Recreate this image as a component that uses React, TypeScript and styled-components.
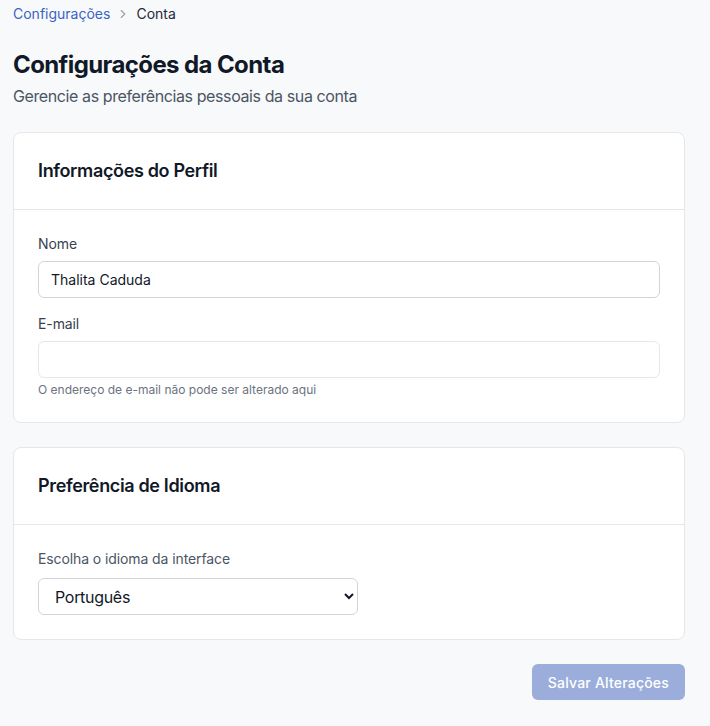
import React from 'react';
import styled, { createGlobalStyle } from 'styled-components';

const GlobalStyle = createGlobalStyle`
  html, body {
    margin: 0;
    padding: 0;
    background: #f8f9fb;
  }
  body {
    font-family: Inter, "Noto Sans", "Liberation Sans", sans-serif;
    color: #111827;
  }
`;

const Page = styled.main`
  padding: 4px 25px 24px 13px;
`;

const Breadcrumb = styled.nav`
  display: flex;
  align-items: center;
  gap: 6px;
  font-size: 14px;
  line-height: 20px;
`;

const CrumbLink = styled.a`
  color: #3b63c4;
  text-decoration: none;
`;

const CrumbCurrent = styled.span`
  color: #1f2937;
`;

const Title = styled.h1`
  margin: 25px 0 0;
  font-size: 24px;
  line-height: 32px;
  font-weight: 700;
  letter-spacing: -0.6px;
  color: #111827;
`;

const Subtitle = styled.p`
  margin: 3px 0 0;
  font-size: 16px;
  line-height: 24px;
  letter-spacing: -0.4px;
  color: #4b5563;
`;

const Card = styled.section`
  margin-top: 24px;
  background: #fff;
  border: 1px solid #e5e7eb;
  border-radius: 8px;
`;

const CardHeader = styled.header`
  padding: 24px;
  border-bottom: 1px solid #e5e7eb;
`;

const CardTitle = styled.h2`
  margin: 0;
  font-size: 18px;
  line-height: 28px;
  font-weight: 600;
  letter-spacing: -0.35px;
  color: #111827;
`;

const CardBody = styled.div`
  padding: 24px;
  display: flex;
  flex-direction: column;
  gap: 16px;
`;

const Field = styled.div`
  display: flex;
  flex-direction: column;
`;

const Label = styled.label<{ $muted?: boolean }>`
  font-size: 14px;
  line-height: 20px;
  letter-spacing: -0.1px;
  color: ${(p) => (p.$muted ? '#4b5563' : '#374151')};
  margin-bottom: ${(p) => (p.$muted ? '9px' : '7px')};
`;

const Input = styled.input<{ $disabled?: boolean }>`
  box-sizing: border-box;
  width: 100%;
  height: 37px;
  padding: 0 12px;
  font-family: inherit;
  font-size: 14px;
  color: #111827;
  background: #fff;
  border: 1px solid ${(p) => (p.$disabled ? '#e5e7eb' : '#d1d5db')};
  border-radius: 6px;
  outline: none;
`;

const Help = styled.p`
  margin: 4px 0 0;
  font-size: 12px;
  line-height: 16px;
  color: #6b7280;
`;

const Select = styled.select`
  box-sizing: border-box;
  width: 320px;
  height: 37px;
  padding: 0 8px 0 12px;
  font-family: inherit;
  font-size: 16px;
  letter-spacing: -0.3px;
  color: #111827;
  background: #fff;
  border: 1px solid #d1d5db;
  border-radius: 6px;
  outline: none;
`;

const Actions = styled.div`
  display: flex;
  justify-content: flex-end;
  margin-top: 24px;
`;

const SaveButton = styled.button`
  height: 36px;
  padding: 0 16px;
  font-family: inherit;
  font-size: 14px;
  font-weight: 500;
  letter-spacing: 0.2px;
  color: #fff;
  background: #9aaddb;
  border: none;
  border-radius: 6px;
  cursor: not-allowed;
`;

const Chevron = () => (
  <svg width="14" height="14" viewBox="0 0 24 24" fill="none" stroke="#9ca3af" strokeWidth="2" strokeLinecap="round" strokeLinejoin="round">
    <path d="m9 18 6-6-6-6" />
  </svg>
);

const App: React.FC = () => {
  return (
    <>
      <GlobalStyle />
      <Page>
        <Breadcrumb>
          <CrumbLink href="#">Configurações</CrumbLink>
          <Chevron />
          <CrumbCurrent>Conta</CrumbCurrent>
        </Breadcrumb>
        <Title>Configurações da Conta</Title>
        <Subtitle>Gerencie as preferências pessoais da sua conta</Subtitle>

        <Card>
          <CardHeader>
            <CardTitle>Informações do Perfil</CardTitle>
          </CardHeader>
          <CardBody>
            <Field>
              <Label htmlFor="nome">Nome</Label>
              <Input id="nome" defaultValue="Thalita Caduda" />
            </Field>
            <Field>
              <Label htmlFor="email">E-mail</Label>
              <Input id="email" $disabled readOnly />
              <Help>O endereço de e-mail não pode ser alterado aqui</Help>
            </Field>
          </CardBody>
        </Card>

        <Card>
          <CardHeader>
            <CardTitle>Preferência de Idioma</CardTitle>
          </CardHeader>
          <CardBody>
            <Field>
              <Label $muted htmlFor="idioma">Escolha o idioma da interface</Label>
              <Select id="idioma" defaultValue="pt">
                <option value="pt">Português</option>
                <option value="en">English</option>
                <option value="es">Español</option>
              </Select>
            </Field>
          </CardBody>
        </Card>

        <Actions>
          <SaveButton disabled>Salvar Alterações</SaveButton>
        </Actions>
      </Page>
    </>
  );
};

export default App;
